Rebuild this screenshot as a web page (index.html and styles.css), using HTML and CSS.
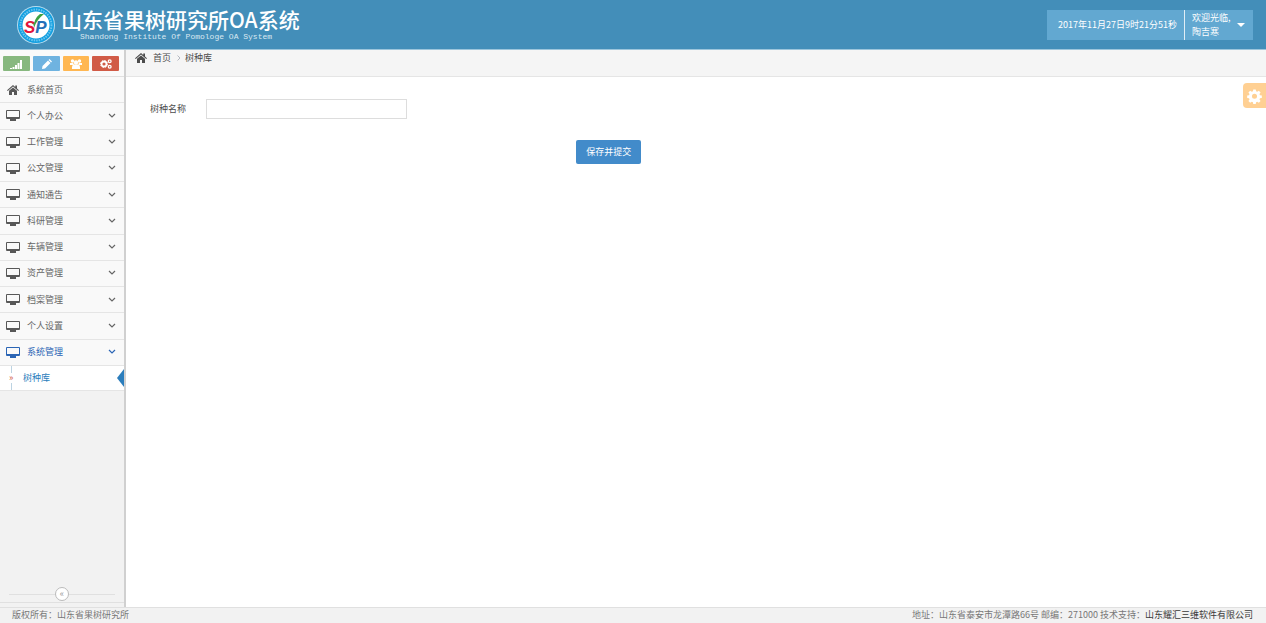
FILE: index.html
```html
<!DOCTYPE html>
<html lang="zh-CN">
  <head>
    <meta charset="UTF-8" />
    <meta name="viewport" content="width=device-width, initial-scale=1.0" />
    <title>山东省果树研究所OA系统</title>
    <link rel="stylesheet" href="styles.css">
  </head>
  <body>
    <!-- Shared icons -->
    <svg class="sprite" aria-hidden="true">
      <symbol id="home" viewBox="0 0 24 20">
        <path d="M12 0 0 10.4l1.5 1.7L12 3l10.500 9.100L24 10.400l-4-3.500V1h-3.500v2.900z" />
        <path d="M12 4.800 4 11.700V20h6v-6h4v6h6v-8.300z" />
      </symbol>
      <symbol id="desktop" viewBox="0 0 14 11">
        <path fill-rule="evenodd" d="M1 0h12a1 1 0 0 1 1 1v7a1 1 0 0 1-1 1h-3v2H4V9H1a1 1 0 0 1-1-1V1a1 1 0 0 1 1-1zm0 1v6h12V1z" />
      </symbol>
      <symbol id="down" viewBox="0 0 8 6">
        <path d="M1 1l3 3 3-3" fill="none" stroke="currentColor" stroke-width="1.200" />
      </symbol>
      <symbol id="gear" viewBox="0 0 16 16">
        <path fill-rule="evenodd" d="M6.700 1h2.600l.4 2 1.200.5 1.700-1.200 1.900 1.900-1.200 1.700.5 1.200 2 .4v2.600l-2 .4-.5 1.200 1.200 1.700-1.900 1.900-1.700-1.200-1.200.5-.4 2H6.700l-.4-2-1.200-.5-1.700 1.200-1.900-1.900 1.200-1.700-.5-1.200-2-.4V7.500l2-.4.500-1.200L1.500 4.200l1.900-1.900 1.700 1.200L6.300 3zM8 5.500a2.700 2.700 0 1 0 0 5.400 2.700 2.700 0 0 0 0-5.400z" />
      </symbol>
    </svg>

    <header class="navbar">
      <a class="brand" href="#">
        <svg class="logo" viewBox="0 0 40 40" aria-hidden="true">
          <circle cx="20" cy="20" r="19" fill="#b9def0" />
          <circle cx="20" cy="20" r="18" fill="#109ee0" />
          <circle cx="20" cy="20" r="15.500" fill="none" stroke="#6cc5ee" stroke-width="2" stroke-dasharray="1.500 1" />
          <circle cx="20" cy="20" r="13.500" fill="#fff" />
          <text class="logo-text" x="8" y="28"><tspan fill="#e2163c">S</tspan><tspan fill="#2470b9">P</tspan></text>
          <path d="M15 17c2 1 3 3 3 6 2-6 5-10 10-14h-4c-4 3-5 6-6 10z" fill="#3da243" />
        </svg>
        <span class="brand-text">
          <span class="brand-name">山东省果树研究所OA系统</span>
          <span class="brand-sub">Shandong Institute Of Pomologe OA System</span>
        </span>
      </a>
      <div class="user-box">
        <span class="clock">2017年11月27日9时21分51秒</span>
        <button class="user-menu" type="button">
          <span>欢迎光临,<br>陶吉寒</span>
          <svg class="caret" viewBox="0 0 8 4" aria-hidden="true"><path d="M0 0h8L4 4z" /></svg>
        </button>
      </div>
    </header>

    <div class="container">
      <aside class="sidebar">
        <div class="shortcuts">
          <button class="green" type="button" aria-label="统计">
            <svg viewBox="0 0 12 10"><path d="M0 9h2v1H0zM2.500 8h2v2h-2zM5 6h2v4H5zM7.500 4h2v6h-2zM10 1h2v9h-2z" /></svg>
          </button>
          <button class="blue" type="button" aria-label="编辑">
            <svg viewBox="0 0 12 10"><path d="M2 10l.5-3L8 1.500 10.500 4 5 9.500zM8.600 .9l.9-.9L12 2.500l-.9.900z" /></svg>
          </button>
          <button class="orange" type="button" aria-label="用户">
            <svg viewBox="0 0 12 10"><circle cx="2.500" cy="2" r="1.700" /><circle cx="9.500" cy="2" r="1.700" /><circle cx="6" cy="3.500" r="2.200" /><path d="M0 4h3.200L4 6H0zM12 4H8.800L8 6h4zM2 10V8q0-2.500 2-2.500h4q2 0 2 2.500v2z" /></svg>
          </button>
          <button class="red" type="button" aria-label="设置">
            <svg viewBox="0 0 12 10"><circle cx="4" cy="5" r="2.500" fill="none" stroke="currentColor" stroke-width="1.800" /><circle cx="4" cy="5" r="3.500" fill="none" stroke="currentColor" stroke-dasharray="1.400 1.350" /><circle cx="9.700" cy="2.200" r="1.400" fill="none" stroke="currentColor" stroke-width="1.300" /><circle cx="9.700" cy="7.800" r="1.400" fill="none" stroke="currentColor" stroke-width="1.300" /></svg>
          </button>
        </div>

        <nav>
          <ul class="menu">
            <li><a href="#"><svg class="icon home"><use href="#home" /></svg>系统首页</a></li>
            <li><a href="#"><svg class="icon"><use href="#desktop" /></svg>个人办公<svg class="arrow"><use href="#down" /></svg></a></li>
            <li><a href="#"><svg class="icon"><use href="#desktop" /></svg>工作管理<svg class="arrow"><use href="#down" /></svg></a></li>
            <li><a href="#"><svg class="icon"><use href="#desktop" /></svg>公文管理<svg class="arrow"><use href="#down" /></svg></a></li>
            <li><a href="#"><svg class="icon"><use href="#desktop" /></svg>通知通告<svg class="arrow"><use href="#down" /></svg></a></li>
            <li><a href="#"><svg class="icon"><use href="#desktop" /></svg>科研管理<svg class="arrow"><use href="#down" /></svg></a></li>
            <li><a href="#"><svg class="icon"><use href="#desktop" /></svg>车辆管理<svg class="arrow"><use href="#down" /></svg></a></li>
            <li><a href="#"><svg class="icon"><use href="#desktop" /></svg>资产管理<svg class="arrow"><use href="#down" /></svg></a></li>
            <li><a href="#"><svg class="icon"><use href="#desktop" /></svg>档案管理<svg class="arrow"><use href="#down" /></svg></a></li>
            <li><a href="#"><svg class="icon"><use href="#desktop" /></svg>个人设置<svg class="arrow"><use href="#down" /></svg></a></li>
            <li class="open"><a href="#"><svg class="icon"><use href="#desktop" /></svg>系统管理<svg class="arrow"><use href="#down" /></svg></a></li>
          </ul>
          <ul class="submenu">
            <li><a href="#"><span class="mark">»</span>树种库<svg class="pointer" viewBox="0 0 7 18"><path d="M7 0v18L0 9z" /></svg></a></li>
          </ul>
        </nav>

        <div class="collapse">
          <button type="button" aria-label="收起菜单">«</button>
        </div>
      </aside>

      <main>
        <nav class="breadcrumb">
          <svg class="home"><use href="#home" /></svg>
          <a href="#">首页</a>
          <svg class="sep" viewBox="0 0 4 6"><path d="M.5 .5 3 3 .5 5.500" fill="none" stroke="currentColor" /></svg>
          <span>树种库</span>
        </nav>
        <form>
          <div class="field">
            <label for="treeName">树种名称</label>
            <input type="text" id="treeName" />
          </div>
          <div class="actions">
            <button class="submit" type="submit">保存并提交</button>
          </div>
        </form>
        <button class="settings" type="button" aria-label="页面设置">
          <svg><use href="#gear" /></svg>
        </button>
      </main>
    </div>

    <footer>
      <span>版权所有：山东省果树研究所</span>
      <span>地址：山东省泰安市龙潭路66号 邮编：271000 技术支持：<a href="#">山东耀汇三维软件有限公司</a></span>
    </footer>
  </body>
</html>
```
FILE: styles.css
```css
* {
  box-sizing: border-box;
}
body {
  margin: 0;
  min-height: 100vh;
  display: flex;
  flex-direction: column;
  font-family: "Noto Sans CJK SC", sans-serif;
  font-size: 9px;
  line-height: 14px;
  color: #4c4c4c;
  background-color: #fff;
}
a {
  color: inherit;
  text-decoration: none;
}
button {
  border: none;
  padding: 0;
  font: inherit;
  color: #fff;
  cursor: pointer;
}
svg {
  fill: currentColor;
}
ul {
  list-style: none;
  margin: 0;
  padding: 0;
}
.sprite {
  display: none;
}

/* Header */
.navbar {
  display: flex;
  justify-content: space-between;
  align-items: center;
  height: 50px;
  padding: 0 13px 0 16px;
  background-color: #438eb9;
  border-bottom: 1px solid #9cc5dc;
  color: #fff;
}
.brand {
  display: flex;
  align-items: center;
  gap: 5px;
}
.logo {
  width: 40px;
  height: 40px;
}
.logo-text {
  font-family: "Liberation Sans", sans-serif;
  font-size: 17px;
  font-style: italic;
  font-weight: bold;
}
.brand-text {
  display: flex;
  flex-direction: column;
  gap: 2px;
  padding-bottom: 2px;
}
.brand-name {
  font-size: 21px;
  line-height: 24px;
  font-weight: 500;
}
.brand-sub {
  padding-left: 19px;
  font-family: "Liberation Mono", monospace;
  font-size: 8px;
  line-height: 8px;
  color: #d9e8f1;
}
.user-box {
  display: flex;
  height: 30px;
  background-color: #62a8d1;
}
.clock {
  padding: 8px 7px 8px 11px;
}
.user-menu {
  display: flex;
  align-items: center;
  justify-content: space-between;
  width: 69px;
  padding: 0 8px 0 7px;
  border-left: 1px solid #e1eef6;
  background: none;
  text-align: left;
}
.caret {
  width: 8px;
  height: 4px;
}

/* Layout */
.container {
  display: flex;
  flex: 1;
}
.sidebar {
  display: flex;
  flex-direction: column;
  width: 126px;
  background-color: #f2f2f2;
  border-right: 2px solid #d0d0d0;
}
main {
  position: relative;
  flex: 1;
}

/* Sidebar */
.shortcuts {
  display: flex;
  gap: 3px;
  height: 27px;
  padding: 6px 5px 5px 3px;
  background-color: #fafafa;
  border-bottom: 1px solid #e0e0e0;
}
.shortcuts button {
  display: flex;
  flex: 1;
  align-items: center;
  justify-content: center;
  border-radius: 1px;
}
.shortcuts svg {
  width: 12px;
  height: 10px;
}
.green {
  background-color: #87b87f;
}
.blue {
  background-color: #6fb3e0;
}
.orange {
  background-color: #ffb752;
}
.red {
  background-color: #d15b47;
}
.menu {
  display: flex;
  flex-direction: column;
  height: 289px;
  background-color: #f9f9f9;
}
.menu li {
  flex: 1;
  border-bottom: 1px solid #e5e5e5;
  color: #666;
}
.menu a {
  display: flex;
  align-items: center;
  height: 100%;
  padding: 0 8px 0 6px;
}
.menu .icon {
  width: 14px;
  height: 11px;
  margin-right: 7px;
  color: #585858;
}
.menu .home {
  height: 10px;
}
.arrow {
  width: 8px;
  height: 6px;
  margin-left: auto;
}
.menu .open,
.menu .open .icon {
  color: #2b65b5;
}
.submenu {
  background-color: #fff;
  border-bottom: 1px solid #e5e5e5;
  color: #2b7dbc;
}
.submenu a {
  display: flex;
  align-items: center;
  height: 24px;
}
.mark {
  width: 14px;
  margin-left: 9px;
  line-height: 24px;
  color: #d15b47;
  background: linear-gradient(#bcd3e2 7px, transparent 7px, transparent 17px, #bcd3e2 17px) 2px 0 / 1px 100% no-repeat;
}
.pointer {
  width: 7px;
  height: 18px;
  margin-left: auto;
}
.collapse {
  margin-top: auto;
  margin-bottom: 4px;
  padding: 0 8px 1px;
  background: linear-gradient(#e0e0e0, #e0e0e0) center 7px / 106px 1px no-repeat;
  border-bottom: 1px solid #e0e0e0;
}
.collapse button {
  display: block;
  width: 14px;
  height: 14px;
  margin: 0 auto;
  border: 1px solid #bbb;
  border-radius: 50%;
  background-color: #fff;
  line-height: 10px;
  color: #999;
}

/* Content */
.breadcrumb {
  display: flex;
  align-items: center;
  height: 27px;
  padding: 0 9px 11px;
  background-color: #f5f5f5;
  border-bottom: 1px solid #e5e5e5;
}
.breadcrumb .home {
  width: 12px;
  height: 10px;
  margin-right: 6px;
}
.sep {
  width: 4px;
  height: 6px;
  margin: 0 4px 0 6px;
  color: #b2b6bf;
}
form {
  padding: 22px 24px;
}
.field {
  display: flex;
  align-items: center;
  gap: 20px;
}
.field input {
  width: 201px;
  height: 20px;
  padding: 2px 4px;
  border: 1px solid #ddd;
  font: inherit;
}
.actions {
  width: 84%;
  margin-top: 21px;
  text-align: center;
}
.submit {
  height: 24px;
  padding: 0 10px;
  border-radius: 2px;
  background-color: #428bca;
}
.settings {
  position: absolute;
  top: 33px;
  right: 0;
  width: 23px;
  height: 25px;
  border-radius: 4px 0 0 4px;
  background-color: #ffd093;
}
.settings svg {
  display: block;
  width: 15px;
  height: 16px;
  margin: 0 auto;
}

/* Footer */
footer {
  display: flex;
  justify-content: space-between;
  height: 16px;
  padding: 0 13px 0 12px;
  border-top: 1px solid #e0e0e0;
  background-color: #f2f2f2;
  color: #777;
}
footer a {
  color: #393939;
}
```
